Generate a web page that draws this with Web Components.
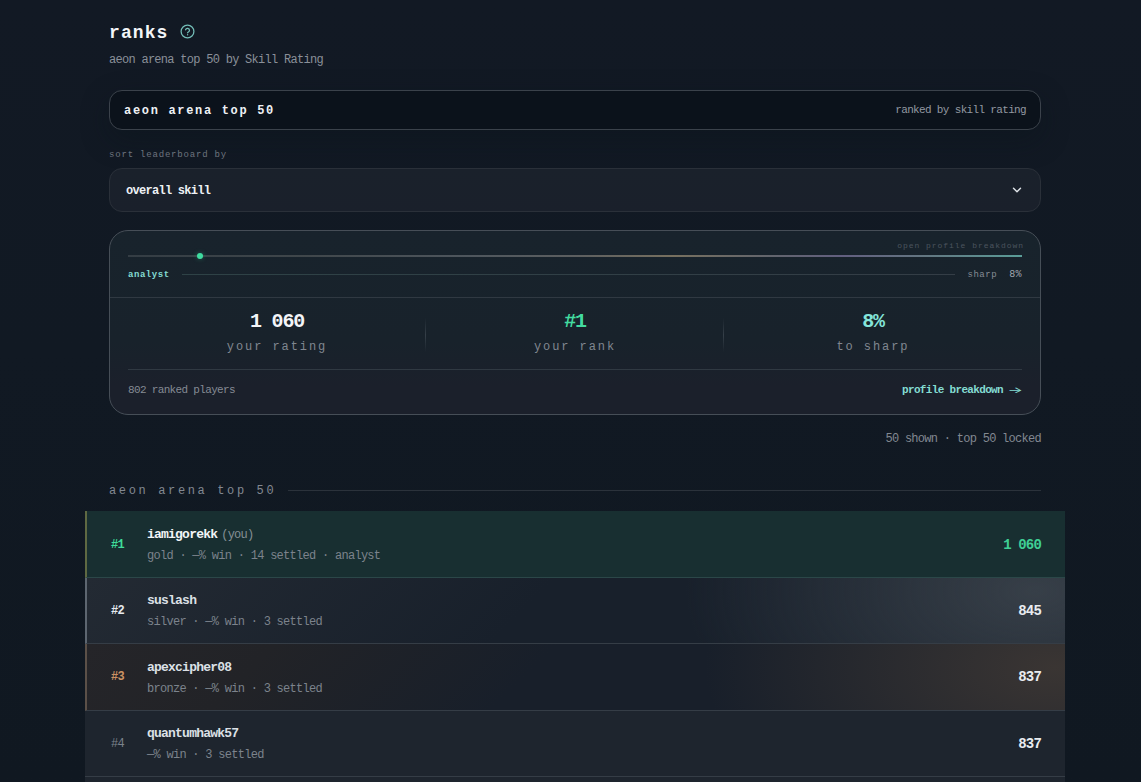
<!DOCTYPE html>
<html lang="en">
<head>
<meta charset="utf-8">
<title>ranks</title>
<style>
    html, body { height: 100%; }
    body {
        margin: 0;
        overflow: hidden;
        background: linear-gradient(180deg, #121924 0%, #111923 45%, #101821 100%);
        font-family: "Liberation Mono", monospace;
        color: #eceff4;
    }
</style>
</head>
<body>
<ranks-page></ranks-page>

<script>
const define = (name, html) => {
    const template = document.createElement('template');
    template.innerHTML = html;
    customElements.define(name, class extends HTMLElement {
        constructor() {
            super();
            this.attachShadow({ mode: 'open' });
            this.shadowRoot.appendChild(template.content.cloneNode(true));
        }
    });
};

// letter-spacing on every text is (tracking - 0.06em), the mono face is tightened to a 0.54em pitch

define('page-header', `
    <style>
        :host { display: block; height: 68px; }
        .title { display: flex; align-items: center; gap: 12px; height: 23px; }
        h1 { margin: 0; padding-top: 3px; font-size: 18px; line-height: 23px; letter-spacing: 0.06em; color: #f3f5f8; }
        svg { display: block; }
        p { margin: 5px 0 0; font-size: 12px; line-height: 24px; letter-spacing: -0.06em; color: #8a9099; }
    </style>
    <div class="title">
        <h1><slot name="title"></slot></h1>
        <svg width="15" height="15" viewBox="0 0 15 15" fill="none" stroke="#74beb8" stroke-width="1.25" stroke-linecap="round" stroke-linejoin="round">
            <circle cx="7.5" cy="7.5" r="6.4"/>
            <path d="M5.6 5.8a2 2 0 0 1 3.9.6c0 1.3-1.9 1.6-1.9 2.4"/>
            <path d="M7.6 10.7v.05"/>
        </svg>
    </div>
    <p><slot></slot></p>
`);

define('board-banner', `
    <style>
        :host {
            display: flex; align-items: center; justify-content: space-between;
            box-sizing: border-box; height: 40px; padding: 0 14px;
            border: 1px solid #3b424b; border-radius: 13px;
            background: #0b121b;
            box-shadow: 0 10px 28px rgba(9, 20, 27, 0.35);
        }
        b { padding-top: 2px; font-size: 12px; letter-spacing: 0.14em; color: #eef1f5; }
        span { font-size: 11px; letter-spacing: -0.06em; color: #9298a1; }
    </style>
    <b><slot name="title"></slot></b>
    <span><slot></slot></span>
`);

define('sort-select', `
    <style>
        :host { display: block; margin-top: 18px; }
        label { display: block; font-size: 9px; line-height: 14px; letter-spacing: 0.09em; color: #6d747e; }
        .field {
            display: flex; align-items: center; justify-content: space-between;
            box-sizing: border-box; height: 44px; margin-top: 6px; padding: 0 18px 0 16px;
            border: 1px solid #2a3039; border-radius: 13px;
            background: linear-gradient(180deg, #1a212b, #1a202b);
        }
        b { padding-top: 2px; font-size: 12px; letter-spacing: -0.06em; color: #eef1f5; }
    </style>
    <label><slot name="label"></slot></label>
    <div class="field">
        <b><slot></slot></b>
        <svg width="10" height="8" viewBox="0 0 10 8" fill="none" stroke="#dfe3e8" stroke-width="1.4" stroke-linecap="round" stroke-linejoin="round"><path d="M1.5 2.2 5 5.8 8.5 2.2"/></svg>
    </div>
`);

define('stat-cell', `
    <style>
        :host { display: flex; flex: 1; flex-direction: column; align-items: center; color: #f3f5f8; }
        b { font-size: 20px; line-height: 26px; letter-spacing: -0.06em; }
        span { margin-top: 5px; font-size: 12px; line-height: 14px; letter-spacing: 0.16em; color: #808790; }
    </style>
    <b><slot></slot></b>
    <span><slot name="label"></slot></span>
`);

define('profile-card', `
    <style>
        :host {
            display: block; box-sizing: border-box; height: 185px; margin-top: 18px;
            border: 1px solid #464e57; border-radius: 19px;
            background: linear-gradient(180deg, #18232c 0%, #18222b 60%, #1b202b 85%, #1b202b 100%);
        }
        .progress { box-sizing: border-box; height: 67px; padding: 8px 18px 0; border-bottom: 1px solid #303942; }
        .hint { margin-right: -2px; text-align: right; font-size: 8px; line-height: 14px; letter-spacing: 0.12em; color: #4b545e; }
        .track {
            display: flex; align-items: center; height: 2px; margin-top: 2px;
            background: linear-gradient(90deg, #343d44 0%, #40474b 20%, #4e565d 38%, #5c5f60 50%, #77705f 61%, #62656d 72%, #625f80 80%, #637681 89%, #5a9d98 100%);
        }
        .dot { width: 6px; height: 6px; margin-left: 69px; border-radius: 50%; background: #3fdca0; box-shadow: 0 0 5px rgba(63, 220, 160, 0.35); }
        .tiers { display: flex; align-items: center; height: 14px; margin-top: 10px; font-size: 9px; letter-spacing: 0.06em; }
        .tiers b { padding-top: 1px; color: #84dcd2; }
        .tiers i { flex: 1; height: 1px; margin: 0 12px; background: linear-gradient(90deg, #2e4246, #343d46); }
        .next { padding-top: 1px; color: #858c95; }
        .percent { margin-left: 12px; padding-top: 1px; font-size: 10px; letter-spacing: 0.04em; color: #a1a7ae; }
        .stats { display: flex; align-items: flex-start; box-sizing: border-box; height: 72px; margin: 0 18px; padding-top: 11px; border-bottom: 1px solid #303942; }
        .stats hr { flex: none; width: 1px; height: 34px; margin: 9px 0 0 -1px; border: 0; background: linear-gradient(180deg, transparent, #353f48, transparent); }
        .rank { color: #43dba0; }
        .to-next { color: #84e5da; }
        .foot { display: flex; align-items: center; justify-content: space-between; height: 38px; margin: 1px 18px 0; font-size: 11px; letter-spacing: -0.06em; color: #858b94; }
        .foot b { display: flex; align-items: center; gap: 6px; color: #84dcd2; }
        .arrow { width: 13px; font-family: Inter, sans-serif; font-weight: 500; font-size: 13px; line-height: 10px; letter-spacing: 0; transform: scale(1.25, 0.68); }
    </style>
    <div class="progress">
        <div class="hint">open profile breakdown</div>
        <div class="track"><span class="dot"></span></div>
        <div class="tiers"><b>analyst</b><i></i><span class="next">sharp</span><span class="percent">8%</span></div>
    </div>
    <div class="stats">
        <stat-cell>1 060<span slot="label">your rating</span></stat-cell>
        <hr>
        <stat-cell class="rank">#1<span slot="label">your rank</span></stat-cell>
        <hr>
        <stat-cell class="to-next">8%<span slot="label">to sharp</span></stat-cell>
    </div>
    <div class="foot"><span>802 ranked players</span><b>profile breakdown<span class="arrow">→</span></b></div>
`);

define('section-heading', `
    <style>
        :host { display: flex; align-items: center; gap: 12px; height: 20px; margin-top: 31px; }
        span { padding-top: 2px; font-size: 12px; letter-spacing: 0.22em; color: #828891; }
        i { flex: 1; height: 1px; background: #2b323b; }
    </style>
    <span><slot></slot></span><i></i>
`);

define('rank-row', `
    <style>
        :host {
            display: flex; align-items: center; box-sizing: border-box; height: 66.4px;
            padding: 0 24px 0 26px;
            border-bottom: 1px solid #353d46;
            background: #1e252e;
            --rank: #7b828b;
            --score: #e9ecf0;
        }
        :host([tier]) { padding-left: 24px; border-left: 2px solid transparent; }
        :host([tier="gold"]) { background: #182f31; border-bottom-color: #2b4748; border-left-color: #5f6942; --rank: #3fdc9a; --score: #3fcf95; }
        :host([tier="silver"]) {
            border-left-color: #5d6670; --rank: #e6eaef;
            background: radial-gradient(ellipse 350px 190px at 97% 20%, #373f48, rgba(55, 63, 72, 0)), linear-gradient(135deg, #232a33, #18202b 45%);
        }
        :host([tier="bronze"]) {
            border-left-color: #5b5048; --rank: #cb9263;
            background: radial-gradient(ellipse 350px 190px at 99% 35%, #3a3533, rgba(58, 53, 51, 0)), linear-gradient(135deg, #252529, #222327 18%, #181f2a 45%);
        }
        .rank { width: 36px; padding-top: 1px; font-size: 12px; font-weight: 700; letter-spacing: -0.06em; color: var(--rank); }
        :host(:not([tier])) .rank { font-weight: 400; }
        .who { flex: 1; padding-top: 3px; }
        .name { font-size: 13px; line-height: 20px; letter-spacing: -0.06em; color: #dce0e6; font-weight: 700; }
        :host([tier="gold"]) .name { color: #f2f5f7; }
        ::slotted(small) { margin-left: 4px; font-size: 12px; font-weight: 400; color: #858f95; }
        .meta { margin-top: 2px; font-size: 12px; line-height: 19px; letter-spacing: -0.06em; color: #7c838c; white-space: pre; }
        .score { padding-top: 1px; font-size: 14px; font-weight: 700; letter-spacing: -0.06em; color: var(--score); }
    </style>
    <span class="rank"><slot name="rank"></slot></span>
    <div class="who">
        <div class="name"><slot></slot></div>
        <div class="meta"><slot name="meta"></slot></div>
    </div>
    <span class="score"><slot name="score"></slot></span>
`);

define('ranks-page', `
    <style>
        :host { display: block; box-sizing: border-box; height: 100%; padding: 20px 100px 0 109px; overflow: hidden; }
        .count { margin-top: 14px; text-align: right; font-size: 12px; line-height: 20px; letter-spacing: -0.06em; color: #828891; }
        .rows { height: 270.6px; margin: 11.4px -24px 0; overflow: hidden; }
        page-header { margin-bottom: 2px; }
        .rest { height: 5px; border: 0; }
    </style>
    <page-header><span slot="title">ranks</span>aeon arena top 50 by Skill Rating</page-header>
    <board-banner><span slot="title">aeon arena top 50</span>ranked by skill rating</board-banner>
    <sort-select><span slot="label">sort leaderboard by</span>overall skill</sort-select>
    <profile-card></profile-card>
    <div class="count">50 shown · top 50 locked</div>
    <section-heading>aeon arena top 50</section-heading>
    <div class="rows">
        <rank-row tier="gold"><span slot="rank">#1</span>iamigorekk<small>(you)</small><span slot="meta">gold · —% win · 14 settled · analyst</span><span slot="score">1 060</span></rank-row>
        <rank-row tier="silver"><span slot="rank">#2</span>suslash<span slot="meta">silver · —% win · 3 settled</span><span slot="score">845</span></rank-row>
        <rank-row tier="bronze"><span slot="rank">#3</span>apexcipher08<span slot="meta">bronze · —% win · 3 settled</span><span slot="score">837</span></rank-row>
        <rank-row><span slot="rank">#4</span>quantumhawk57<span slot="meta">—% win · 3 settled</span><span slot="score">837</span></rank-row>
        <rank-row class="rest"></rank-row>
    </div>
`);
</script>
</body>
</html>
